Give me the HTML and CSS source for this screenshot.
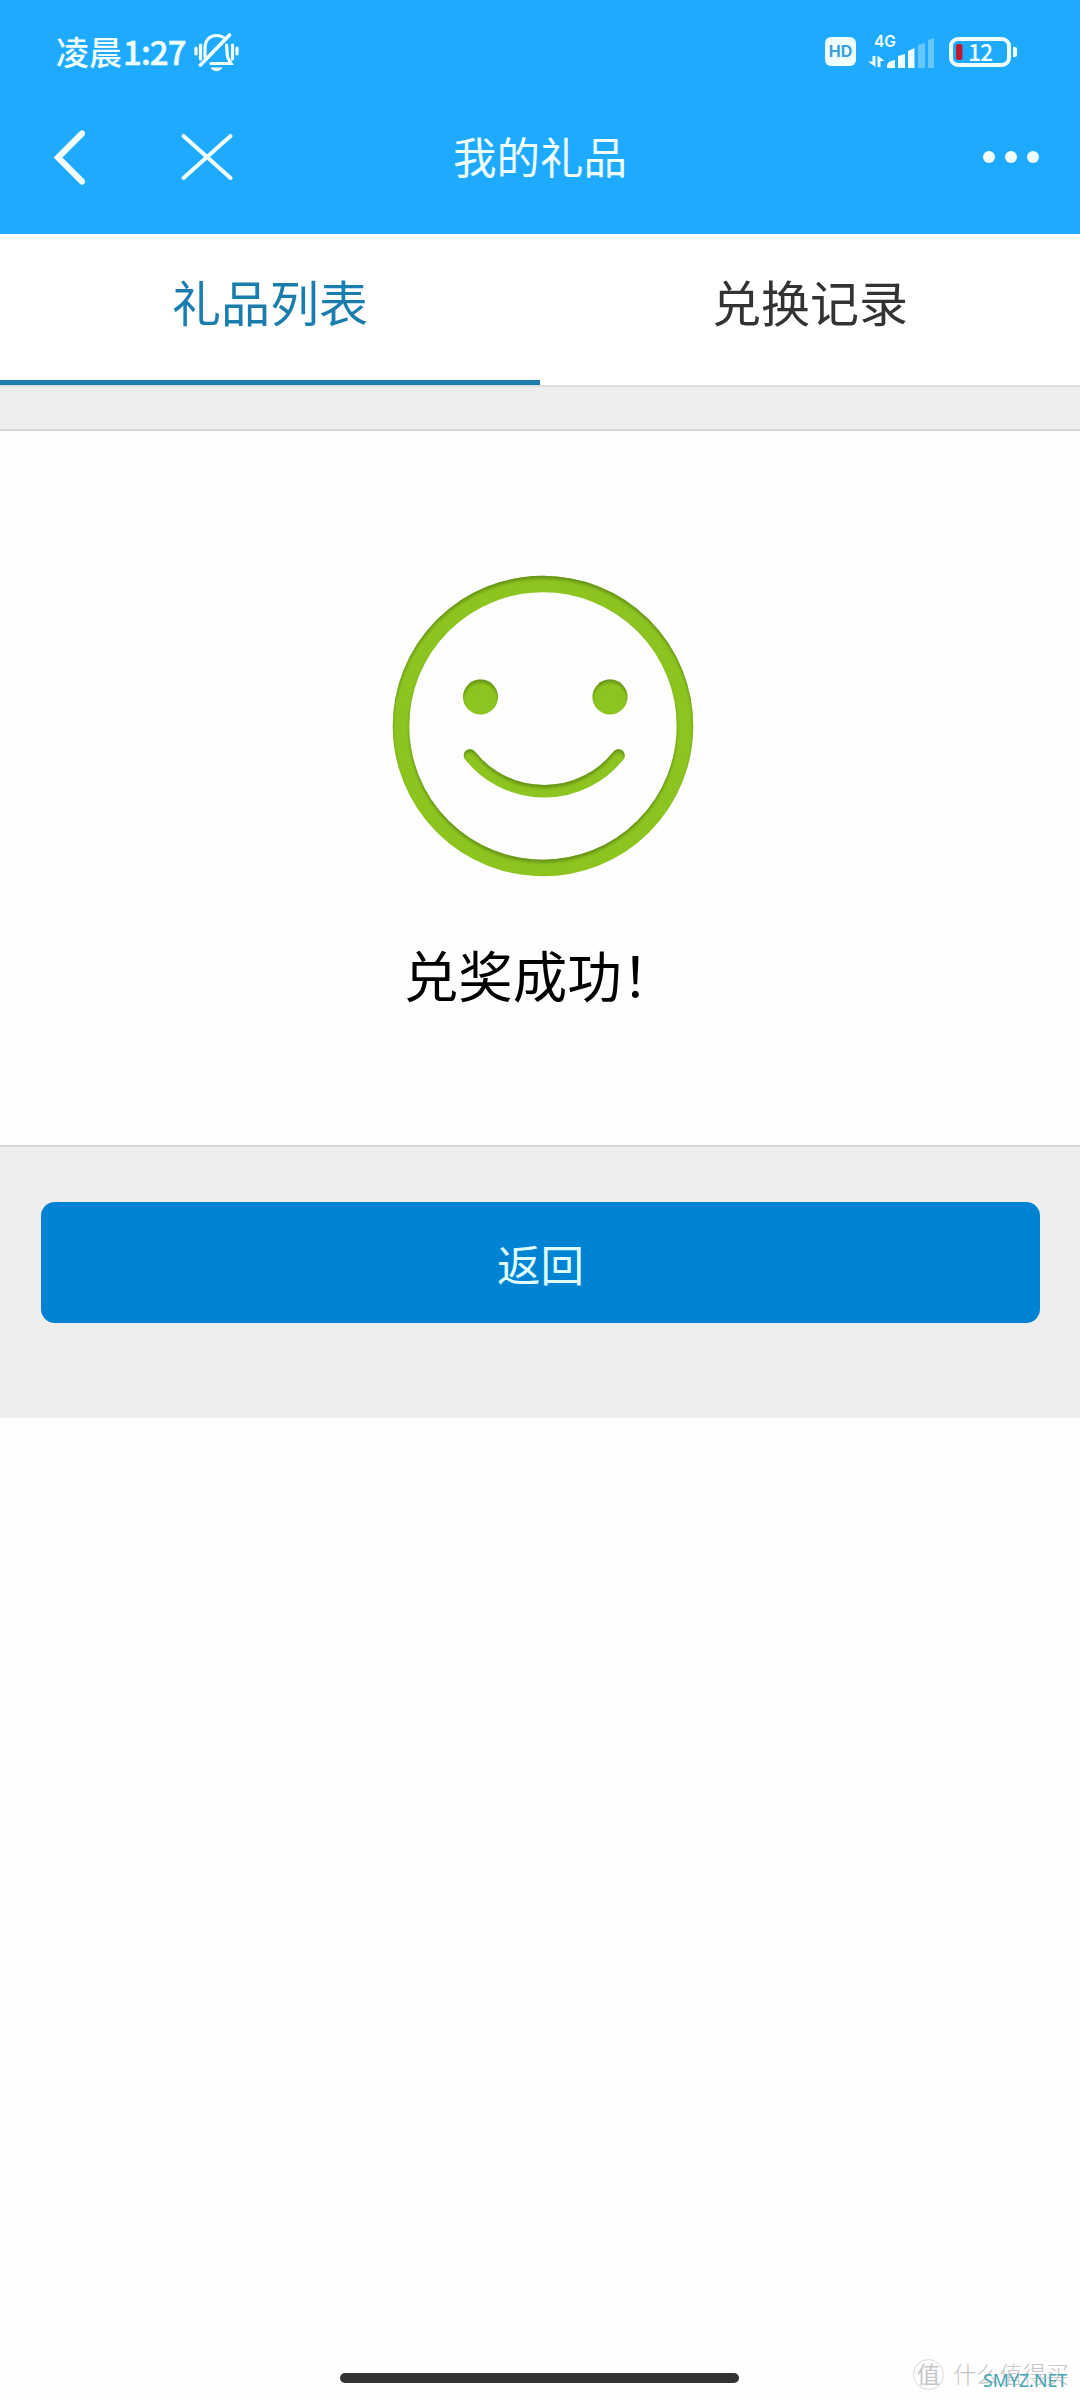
FILE: index.html
```html
<!DOCTYPE html>
<html lang="zh-CN">
<head>
<meta charset="utf-8">
<title>我的礼品</title>
<link rel="stylesheet" href="styles.css">
</head>
<body>
<div class="screen">
  <header class="header">
    <div class="status">
      <div class="status-left">
        <span class="clock">凌晨<span class="time">1:27</span></span>
        <svg class="mute" width="46" height="40" viewBox="0 0 46 40" fill="none" stroke="currentColor" stroke-width="3.200" stroke-linecap="round">
          <path d="M2 15v6M6.500 12v14M38.500 12v14M43 15v6"/>
          <path d="M11 24V15C11 7 16 2.500 22.500 2.500c4 0 7 1.500 9 4M32.500 12c.7 5 .3 10 1.500 13l3 5.500H17"/>
          <path d="M35.500 2L6.500 32" stroke-width="3.600"/>
          <path d="M16.500 34.500h12c-3 5-9 5-12 0z" fill="currentColor" stroke="none"/>
        </svg>
      </div>
      <div class="status-right">
        <span class="hd">HD</span>
        <svg class="signal" width="68" height="36" viewBox="0 0 68 36" fill="currentColor">
          <text x="6" y="14" class="net">4G</text>
          <path d="M4.500 23H7.500V34L0 28.500H4.500zM9.500 34V22.500L16.500 28H12.500V34z"/>
          <path d="M19 35V32Q20 28 27 27V35zM30 35V23L37 21V35zM40 35V18L46.500 15V35z"/>
          <path d="M50 35V12L57 10V35zM60 35V7L66 5V35z" opacity=".35"/>
        </svg>
        <svg class="battery" width="69" height="30" viewBox="0 0 69 30">
          <rect x="2" y="2" width="58" height="26" rx="7" fill="none" stroke="currentColor" stroke-width="4"/>
          <path d="M64 10h2q2 0 2 2v6q0 2-2 2h-2z" fill="currentColor"/>
          <rect x="7" y="7" width="6.500" height="16" rx="2" fill="#bd1a31"/>
          <text x="19" y="23.500" class="level">12</text>
        </svg>
      </div>
    </div>
    <nav class="nav">
      <div class="nav-side">
        <svg width="32" height="56" viewBox="0 0 32 56" fill="none" stroke="currentColor" stroke-width="6.200" stroke-linecap="round"><path d="M29 4.500L5 28.500L29 52.500"/></svg>
        <svg width="52" height="46" viewBox="0 0 52 46" fill="none" stroke="currentColor" stroke-width="4" stroke-linecap="round"><path d="M2.500 2L49.500 44M49.500 2L2.500 44"/></svg>
      </div>
      <h1 class="title">我的礼品</h1>
      <div class="nav-side more"><i class="dot"></i><i class="dot"></i><i class="dot"></i></div>
    </nav>
  </header>
  <div class="tabs">
    <div class="tab active">礼品列表</div>
    <div class="tab">兑换记录</div>
  </div>
  <main class="content">
    <section class="result">
      <svg class="smile" width="302" height="302" viewBox="-151 -151 302 302">
        <defs>
          <filter id="inset" x="-5%" y="-5%" width="110%" height="110%">
            <feOffset in="SourceAlpha" dy="3" result="off"/>
            <feGaussianBlur in="off" stdDeviation="1.800" result="blur"/>
            <feComposite in="SourceAlpha" in2="blur" operator="out" result="edge"/>
            <feFlood flood-color="#5c8418" flood-opacity=".75"/>
            <feComposite in2="edge" operator="in" result="shade"/>
            <feMerge><feMergeNode in="SourceGraphic"/><feMergeNode in="shade"/></feMerge>
          </filter>
        </defs>
        <g filter="url(#inset)" color-interpolation-filters="sRGB">
          <circle r="142" fill="none" stroke="#8dc41f" stroke-width="16.500"/>
          <circle cx="-62.500" cy="-29" r="17.500" fill="#8dc41f"/>
          <circle cx="67" cy="-29" r="17.500" fill="#8dc41f"/>
          <path d="M-73 29.500A95 95 0 0 0 75.500 29.500" fill="none" stroke="#8dc41f" stroke-width="12.500" stroke-linecap="round"/>
        </g>
      </svg>
      <p class="message">兑奖成功！</p>
    </section>
    <button class="back">返回</button>
  </main>
  <footer class="footer"><div class="home"></div></footer>
  <div class="mark">
    <span class="mark-logo">值</span>
    <span class="mark-name">什么值得买</span>
    <span class="mark-site">SMYZ.NET</span>
  </div>
</div>
</body>
</html>
```
FILE: styles.css
```css
* { box-sizing: border-box; }
body {
  margin: 0;
  background: #fefefe;
  font-family: "Noto Sans CJK SC", sans-serif;
}
.screen {
  position: relative;
  display: flex;
  flex-direction: column;
  width: 1080px;
  height: 2400px;
  overflow: hidden;
}
svg { display: block; flex: none; }
#inset * { color-interpolation-filters: sRGB; }

.header {
  height: 234px;
  background: #1eaaff;
  color: #effeff;
}
.status {
  display: flex;
  justify-content: space-between;
  height: 104px;
  padding: 30px 62px 0 56px;
}
.status-left { display: flex; gap: 4px; }
.clock {
  font-size: 33px;
  font-weight: 500;
  line-height: 42px;
  white-space: nowrap;
}
.time { display: inline-block; margin-left: 1px; width: 67px; letter-spacing: -.9px; -webkit-text-stroke: .5px currentColor; }
.mute { margin: 3px 0 0 0; }
.status-right { display: flex; padding-top: 7px; }
.hd {
  width: 31px;
  height: 29px;
  border-radius: 6px;
  background: #effeff;
  color: #3c9edb;
  font: bold 16px/29px Inter, sans-serif;
  text-align: center;
}
.signal { margin: -4px 0 0 12px; }
.battery { margin-left: 13px; }
.net { font: 600 15.5px Inter, sans-serif; }
.level { font: 500 23px "Noto Sans CJK SC", sans-serif; fill: #effeff; letter-spacing: -1px; }

.nav {
  display: grid;
  grid-template-columns: 1fr auto 1fr;
  align-items: center;
  height: 106px;
  padding: 0 41px 0 53px;
}
.nav-side { display: flex; align-items: center; gap: 96px; }
.title {
  margin: 0 0 2px -12px;
  font-size: 43.5px;
  font-weight: 400;
  line-height: 60px;
}
.more { justify-content: flex-end; gap: 10px; }
.dot { width: 12px; height: 12px; border-radius: 50%; background: currentColor; }

.tabs {
  display: flex;
  height: 153px;
  background: #fff;
  border-bottom: 2px solid #dedede;
}
.tab {
  flex: 1;
  height: 151px;
  padding-top: 31px;
  font-size: 49px;
  line-height: 72px;
  text-align: center;
  color: #333;
}
.tab.active { color: #1b7dae; border-bottom: 5px solid #1b7dae; }

.content { height: 1031px; padding-top: 42px; background: #eee; }
.result {
  display: flex;
  flex-direction: column;
  align-items: center;
  height: 718px;
  padding-top: 144px;
  background: #fefefe;
  border-top: 2px solid #d8d8d8;
  border-bottom: 2px solid #d8d8d8;
}
.smile { margin-left: 5px; }
.message {
  margin: 57px 0 0;
  font-size: 54.5px;
  line-height: 80px;
  color: #000;
}
.back {
  display: block;
  width: 999px;
  height: 121px;
  margin: 55px 0 0 41px;
  padding: 1px 0 0;
  border: 0;
  border-radius: 14px;
  background: #0083d3;
  color: #dffcff;
  font: 43.5px "Noto Sans CJK SC", sans-serif;
}

.footer { display: flex; flex: 1; align-items: flex-end; padding: 0 0 17px 340px; }
.home { width: 399px; height: 10px; border-radius: 5px; background: #323232; }

.mark {
  position: absolute;
  left: 913px;
  top: 2359px;
  display: flex;
  gap: 9px;
  color: #c6c6c6;
  white-space: nowrap;
}
.mark-logo {
  width: 31px;
  height: 31px;
  border: 1px solid #d8d8d8;
  border-radius: 50%;
  font-size: 23px;
  line-height: 27px;
  text-align: center;
}
.mark-name { font-size: 23.2px; font-weight: 300; line-height: 29px; }
.mark-site {
  position: absolute;
  left: 70px;
  top: 9px;
  font: 17.8px/25px "Noto Sans", sans-serif;
  color: #45a3b3;
}
```
